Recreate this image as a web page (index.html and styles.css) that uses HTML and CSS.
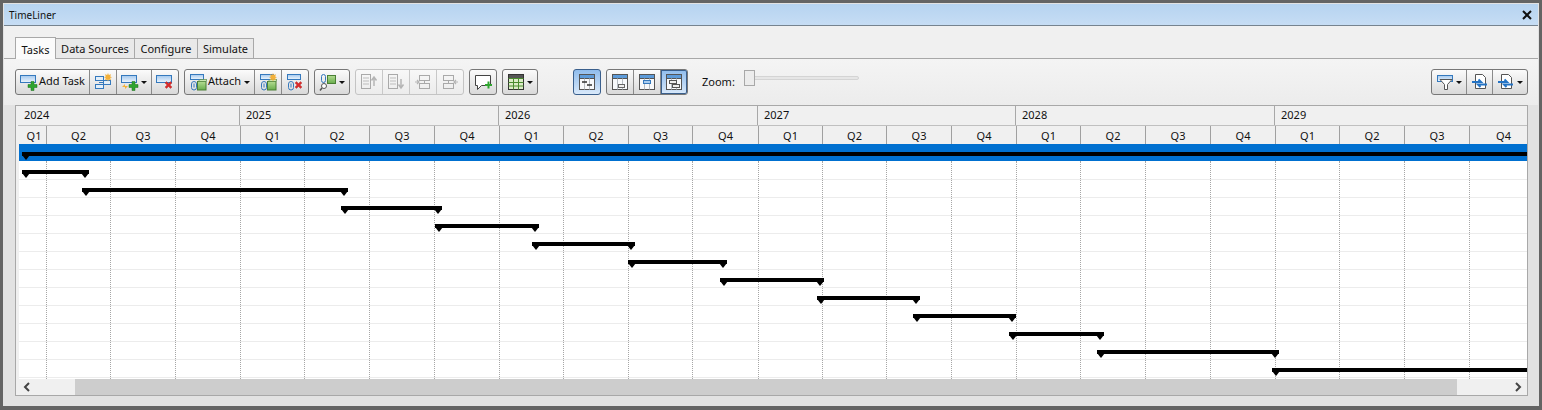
FILE: index.html
```html
<!DOCTYPE html>
<html lang="en">
<head>
<meta charset="utf-8">
<title>TimeLiner</title>
<link rel="stylesheet" href="styles.css">
</head>
<body>
<svg class="defs" width="0" height="0" aria-hidden="true">
  <defs>
    <linearGradient id="bluefill" x1="0" y1="0" x2="0" y2="1"><stop offset="0" stop-color="#a3c8ee"/><stop offset="1" stop-color="#eef6fd"/></linearGradient>
    <linearGradient id="greenfill" x1="0" y1="0" x2="0" y2="1"><stop offset="0" stop-color="#b4dc92"/><stop offset="1" stop-color="#68ad4c"/></linearGradient>
    <symbol id="bar" viewBox="0 0 18 18"><rect x="0.500" y="2.500" width="15" height="7" fill="url(#bluefill)" stroke="#3579bd"/></symbol>
    <symbol id="plus" viewBox="0 0 18 18"><path d="M11 8.500h3v3h3v3h-3v3h-3v-3H8v-3h3z" fill="#2fa52f" stroke="#1c6e1c" stroke-width=".5"/></symbol>
    <symbol id="cross" viewBox="0 0 18 18"><path d="M9 10l1.500-1.500 2 2 2-2L16 10l-2 2 2 2-1.500 1.500-2-2-2 2L9 14l2-2z" fill="#d92b2b" stroke="#9c1a1a" stroke-width=".3"/></symbol>
    <symbol id="spark" viewBox="0 0 18 18"><path d="M14 0l.8 2 2.200-.8-.8 2.200 1.800.8-1.800.8.800 2.200-2.200-.8-.8 2-.8-2-2.200.8.800-2.200-1.800-.8 1.800-.8-.8-2.200 2.200.8z" fill="#f3b13a"/></symbol>
    <symbol id="clip" viewBox="0 0 18 18"><rect x="1.500" y="1.500" width="13" height="5" fill="url(#bluefill)" stroke="#3579bd"/><rect x="2.500" y="8.500" width="5" height="8.500" rx="2.500" fill="none" stroke="#3579bd"/><path d="M5 10.500v4" stroke="#3579bd"/></symbol>
    <symbol id="cube" viewBox="0 0 18 18"><rect x="8.500" y="8.500" width="8.500" height="8.500" fill="url(#greenfill)" stroke="#4a7f35"/><path d="M9 8.500l2-2h7l-1 2z" fill="#cbe8b2" stroke="#4a7f35" stroke-width=".6"/></symbol>
    <symbol id="doc" viewBox="0 0 18 18"><path d="M4.500 1.500h7l3 3v11h-10z" fill="#fff" stroke="#555"/><path d="M1 9h9l-2.500-2.500M16 11.500H7l2.500 2.500" fill="none" stroke="#2473c4" stroke-width="2"/></symbol>
    <symbol id="sheet" viewBox="0 0 18 18"><rect x="1.500" y="1.500" width="15" height="15" fill="#f7f9fb" stroke="#555"/><rect x="2" y="2" width="14" height="3" fill="#5d9bd9"/><path d="M1.500 5.500h15" stroke="#555"/><path d="M6.500 5.500v11M11.500 5.500v11" stroke="#b6bcc2"/></symbol>
    <symbol id="move" viewBox="0 0 18 18"><rect x="1.500" y="1.500" width="9" height="14" fill="none" stroke="#a9a9a9"/><path d="M3 5h6M3 8h6M3 11h6" stroke="#bdbdbd"/></symbol>
    <symbol id="row" viewBox="0 0 18 18"><rect x="5.500" y="2.500" width="10" height="5" fill="none" stroke="#a9a9a9"/><rect x="5.500" y="10.500" width="10" height="5" fill="none" stroke="#a9a9a9"/><path d="M10.500 7.500v3" stroke="#a9a9a9"/></symbol>
  </defs>
</svg>
<div class="window">
  <header class="titlebar">
    <span class="title">TimeLiner</span>
    <svg class="close" width="10" height="10" viewBox="0 0 10 10"><path d="M1 1l8 8M9 1l-8 8" stroke="#111" stroke-width="2"/></svg>
  </header>
  <nav class="tabs">
    <span class="tab active t1">Tasks</span>
    <span class="tab t2">Data Sources</span>
    <span class="tab t3">Configure</span>
    <span class="tab t4">Simulate</span>
  </nav>
  <div class="toolbar">
    <div class="group">
      <span class="btn w74"><svg class="ic"><use href="#bar"/><use href="#plus"/></svg><span class="lbl">Add Task</span></span>
      <span class="btn w27"><svg class="ic"><rect x="1.500" y="3.500" width="8" height="4" fill="#e3eff9" stroke="#3579bd"/><rect x="1.500" y="11.500" width="8" height="4" fill="#e3eff9" stroke="#3579bd"/><path d="M5 9.500h5" stroke="#3579bd"/><rect x="9.500" y="7.500" width="7" height="4" fill="#e3eff9" stroke="#3579bd"/><use href="#spark"/></svg></span>
      <span class="btn w35"><svg class="ic"><use href="#bar"/><use href="#plus"/><path d="M1 14l3-3 0 2h3l-3 3 0-2z" fill="#f3b13a"/></svg><i class="caret"></i></span>
      <span class="btn w28"><svg class="ic"><use href="#bar"/><use href="#cross"/></svg></span>
    </div>
    <div class="group">
      <span class="btn w70"><svg class="ic"><use href="#clip"/><use href="#cube"/></svg><span class="lbl">Attach</span><i class="caret gap"></i></span>
      <span class="btn w27"><svg class="ic"><use href="#clip"/><use href="#cube"/><use href="#spark"/></svg></span>
      <span class="btn w28"><svg class="ic"><use href="#clip"/><use href="#cross"/></svg></span>
    </div>
    <div class="group">
      <span class="btn w36"><svg class="ic"><circle cx="5" cy="13" r="2.500" fill="#fff" stroke="#555"/><path d="M3 15l-2 2.500" stroke="#555" stroke-width="1.500"/><rect x="2.500" y="1.500" width="4" height="8" rx="2" fill="none" stroke="#3579bd"/><rect x="8.500" y="2.500" width="8" height="8" fill="url(#greenfill)" stroke="#4a7f35"/></svg><i class="caret"></i></span>
    </div>
    <div class="group off">
      <span class="btn w27"><svg class="ic"><use href="#move"/><path d="M14 13V5M11.500 7.500L14 4l2.500 3.500" fill="none" stroke="#b5b5b5" stroke-width="1.500"/></svg></span>
      <span class="btn w27"><svg class="ic"><use href="#move"/><path d="M14 6v8M11.500 11.500L14 15l2.500-3.500" fill="none" stroke="#b5b5b5" stroke-width="1.500"/></svg></span>
      <span class="btn w27"><svg class="ic"><use href="#row"/><path d="M1 9h4M3 7l2 2-2 2" fill="none" stroke="#b5b5b5" stroke-width="1.200"/></svg></span>
      <span class="btn w28"><svg class="ic"><g transform="translate(-3 0)"><use href="#row"/></g><path d="M13 9h4M15 7l-2 2 2 2" fill="none" stroke="#b5b5b5" stroke-width="1.200"/></svg></span>
    </div>
    <div class="group">
      <span class="btn w28"><svg class="ic"><path d="M1.500 2.500h15v10h-9l-4 4v-4h-2z" fill="#fff" stroke="#444"/><path d="M11 11h2.500V8.500h2V11H18v2h-2.500v2.500h-2V13H11z" fill="#2fa52f"/></svg></span>
    </div>
    <div class="group">
      <span class="btn w36"><svg class="ic"><rect x="1.500" y="1.500" width="15" height="15" fill="#dcedc8" stroke="#333"/><rect x="2" y="2" width="14" height="3" fill="#555"/><path d="M1.500 5.500h15M1.500 9.500h15M1.500 13h15M6.500 5.500v11M11.500 5.500v11" stroke="#4a8c2f"/></svg><i class="caret"></i></span>
    </div>
    <div class="group wide on">
      <span class="btn w28"><svg class="ic"><use href="#sheet"/><path d="M4 9h5M9 12h5" stroke="#333" stroke-width="1.500"/></svg></span>
    </div>
    <div class="group">
      <span class="btn w27"><svg class="ic"><use href="#sheet"/><rect x="7.500" y="11.500" width="6" height="3" fill="#eee" stroke="#666"/></svg></span>
      <span class="btn w27"><svg class="ic"><use href="#sheet"/><rect x="5.500" y="7.500" width="7" height="3" fill="#a9cdf0" stroke="#3579bd"/></svg></span>
      <span class="btn w28 on"><svg class="ic"><use href="#sheet"/><rect x="4.500" y="7.500" width="7" height="3" fill="#eee" stroke="#555"/><rect x="7.500" y="11.500" width="7" height="3" fill="#eee" stroke="#555"/></svg></span>
    </div>
    <span class="zoom-label">Zoom:</span>
    <div class="slider"><i class="thumb"></i></div>
    <div class="group right">
      <span class="btn w35"><svg class="ic"><rect x="1.500" y="2.500" width="15" height="6" fill="url(#bluefill)" stroke="#3579bd"/><path d="M4 6.500h12l-4.500 5v5h-3v-5z" fill="#fff" stroke="#555"/></svg><i class="caret"></i></span>
      <span class="btn w26"><svg class="ic"><use href="#doc"/></svg></span>
      <span class="btn w34"><svg class="ic"><use href="#doc"/></svg><i class="caret"></i></span>
    </div>
  </div>
  <section class="frame">
    <div class="head years">
      <span style="width:222px">2024</span><span style="width:259px">2025</span><span style="width:259px">2026</span><span style="width:258px">2027</span><span style="width:259px">2028</span><span class="last">2029</span>
    </div>
    <div class="head quarters">
      <span class="first" style="width:28px">Q1</span><span style="width:64px">Q2</span><span style="width:65px">Q3</span><span style="width:65px">Q4</span><span style="width:64px">Q1</span><span style="width:65px">Q2</span><span style="width:65px">Q3</span><span style="width:65px">Q4</span><span style="width:64px">Q1</span><span style="width:65px">Q2</span><span style="width:64px">Q3</span><span style="width:66px">Q4</span><span style="width:64px">Q1</span><span style="width:64px">Q2</span><span style="width:65px">Q3</span><span style="width:65px">Q4</span><span style="width:64px">Q1</span><span style="width:65px">Q2</span><span style="width:65px">Q3</span><span style="width:65px">Q4</span><span style="width:64px">Q1</span><span style="width:65px">Q2</span><span style="width:65px">Q3</span><span style="width:68px">Q4</span>
    </div>
    <div class="chart">
      <div class="rows">
        <div class="row sel"></div><div class="row"></div><div class="row"></div><div class="row"></div><div class="row"></div><div class="row"></div><div class="row"></div><div class="row"></div><div class="row"></div><div class="row"></div><div class="row"></div><div class="row"></div><div class="row"></div>
      </div>
      <i class="v" style="left:27px"></i><i class="v" style="left:91px"></i><i class="v" style="left:156px"></i><i class="v" style="left:221px"></i><i class="v" style="left:285px"></i><i class="v" style="left:350px"></i><i class="v" style="left:415px"></i><i class="v" style="left:480px"></i><i class="v" style="left:544px"></i><i class="v" style="left:609px"></i><i class="v" style="left:673px"></i><i class="v" style="left:739px"></i><i class="v" style="left:803px"></i><i class="v" style="left:867px"></i><i class="v" style="left:932px"></i><i class="v" style="left:997px"></i><i class="v" style="left:1061px"></i><i class="v" style="left:1126px"></i><i class="v" style="left:1191px"></i><i class="v" style="left:1256px"></i><i class="v" style="left:1320px"></i><i class="v" style="left:1385px"></i><i class="v" style="left:1450px"></i>
      <b class="gantt open" style="left:3px;top:8px;width:1506px"></b>
      <b class="gantt" style="left:3px;top:26px;width:67px"></b>
      <b class="gantt" style="left:63px;top:44px;width:266px"></b>
      <b class="gantt" style="left:322px;top:62px;width:101px"></b>
      <b class="gantt" style="left:416px;top:80px;width:104px"></b>
      <b class="gantt" style="left:513px;top:98px;width:103px"></b>
      <b class="gantt" style="left:609px;top:116px;width:99px"></b>
      <b class="gantt" style="left:701px;top:134px;width:104px"></b>
      <b class="gantt" style="left:798px;top:152px;width:103px"></b>
      <b class="gantt" style="left:894px;top:170px;width:103px"></b>
      <b class="gantt" style="left:990px;top:188px;width:95px"></b>
      <b class="gantt" style="left:1078px;top:206px;width:182px"></b>
      <b class="gantt open" style="left:1253px;top:224px;width:256px"></b>
    </div>
    <div class="scrollbar">
      <svg class="arrow" width="8" height="10" viewBox="0 0 8 10"><path d="M6 1L2 5l4 4" fill="none" stroke="#444" stroke-width="2"/></svg>
      <div class="scroll-thumb"></div>
      <svg class="arrow" width="8" height="10" viewBox="0 0 8 10"><path d="M2 1l4 4-4 4" fill="none" stroke="#444" stroke-width="2"/></svg>
    </div>
  </section>
</div>
</body>
</html>
```
FILE: styles.css
```css
* { box-sizing: border-box; }
html, body { margin: 0; padding: 0; }
body { width: 1542px; height: 410px; overflow: hidden; font: 11px "Noto Sans", sans-serif; color: #111; }
.defs { position: absolute; }
.window { width: 1542px; height: 410px; border: 3px solid #646464; border-bottom-width: 4px; background: #e2e2e2; display: flex; flex-direction: column; padding: 1px 1px 0; }
.titlebar { height: 22px; flex: none; display: flex; align-items: center; justify-content: space-between; padding: 0 6px 0 5px; background: linear-gradient(#b6d3f0, #c6ddf4); border-bottom: 1px solid #76838f; }
.title { font-size: 10px; }
.tabs { flex: none; height: 33px; padding: 12px 0 0 11px; display: flex; align-items: flex-end; background: #f0f0f0; border-bottom: 1px solid #a8a8a8; }
.tab { height: 20px; line-height: 19px; text-align: center; background: #e9e9e9; border: 1px solid #a8a8a8; border-left-width: 0; border-bottom: 0; }
.tab.active { height: 22px; margin-bottom: -1px; padding-top: 2px; background: #fbfbfb; border-left-width: 1px; }
.t1 { width: 41px; } .t2 { width: 79px; } .t3 { width: 63px; } .t4 { width: 56px; }
.toolbar { flex: none; height: 46px; padding: 10px 10px 0 11px; display: flex; gap: 5px; align-items: flex-start; background: linear-gradient(#f4f4f4, #ececec); }
.group { display: flex; height: 26px; border: 1px solid #777; border-radius: 3px; background: linear-gradient(#fbfbfb, #d9d9d9); }
.group.off { border-color: #c4c4c4; background: linear-gradient(#f8f8f8, #ececec); }
.group.wide { margin-left: 30px; }
.group.right { margin-left: auto; }
.btn { display: flex; align-items: center; justify-content: center; height: 100%; border-right: 1px solid #8a8a8a; }
.btn:last-child { border-right: 0; }
.off .btn { border-right-color: #c8c8c8; }
.on, .btn.on { background: linear-gradient(#8fbcec, #d9e9fa); border-color: #3a5f8c; }
.btn.on { box-shadow: inset 0 0 0 1px #3a5f8c; border-radius: 0 2px 2px 0; }
.w26 { width: 26px; } .w27 { width: 27px; } .w28 { width: 26px; } .w34 { width: 34px; } .w35 { width: 35px; } .w36 { width: 34px; } .w70 { width: 70px; } .w74 { width: 74px; }
.ic { width: 18px; height: 18px; flex: none; }
.lbl { margin: -3px 0 0 1px; }
.caret { width: 0; height: 0; margin-left: 2px; border: 3px solid transparent; border-top: 3px solid #111; border-bottom: 0; }
.caret.gap { margin-left: 3px; }
.zoom-label { width: 37px; margin: 5px 0 0 9px; line-height: 16px; }
.slider { position: relative; width: 115px; height: 4px; margin: 7px 0 0 0; background: #e6e6e6; border: 1px solid #d4d4d4; border-radius: 2px; }
.thumb { position: absolute; left: -1px; top: -7px; width: 11px; height: 16px; background: #ececec; border: 1px solid #a8a8a8; }
.frame { flex: none; width: 1513px; height: 291px; margin-left: 11px; border: 1px solid #a8a8a8; background: #f0f0f0; }
.head { display: flex; margin-left: 2px; overflow: hidden; }
.head span { flex: none; height: 100%; }
.head .last { flex: 1; }
.years { height: 20px; line-height: 18px; border-bottom: 1px solid #c0c0c0; }
.years span { padding-left: 6px; border-right: 1px solid #a8a8a8; }
.years .last { border-right: 0; }
.quarters { height: 18px; line-height: 19px; margin-left: 3px; }
.quarters span { text-align: center; border-right: 1px solid #a0a0a0; }
.quarters .first { padding-left: 3px; }
.chart { position: relative; height: 235px; margin-left: 3px; overflow: hidden; background: #fff; }
.row { height: 18px; border-bottom: 1px solid #ececec; }
.row.sel { height: 17px; background: #0070d0; border-bottom: 0; }
.row:nth-child(2) { height: 19px; }
.v { position: absolute; top: 17px; bottom: 0; width: 0; border-left: 1px dotted #a6a6a6; }
.gantt { position: absolute; height: 4px; background: #000; }
.gantt::before, .gantt::after { content: ""; position: absolute; top: 3px; border: 4px solid transparent; border-top: 5px solid #000; border-bottom: 0; }
.gantt::before { left: 0; }
.gantt::after { right: 0; }
.gantt.open::after { display: none; }
.scrollbar { height: 16px; margin-left: 2px; display: flex; align-items: center; background: #f0f0f0; }
.arrow { flex: none; margin: 0 5px; }
.scroll-thumb { height: 100%; margin-left: 39px; width: 1382px; background: #cdcdcd; }
.scrollbar .arrow:last-child { margin-left: auto; }
```
